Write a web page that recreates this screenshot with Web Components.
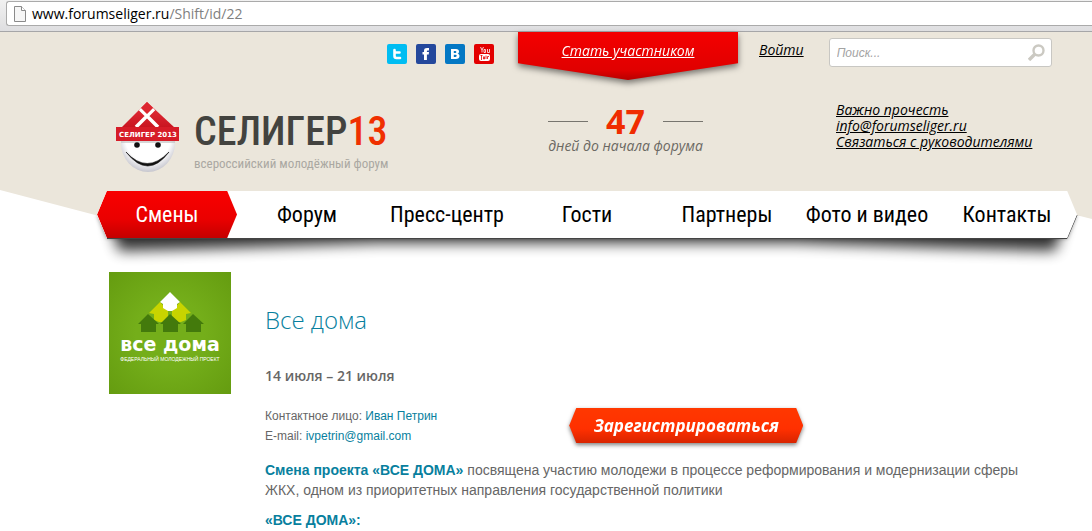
<!DOCTYPE html>
<html lang="ru">
<head>
<meta charset="utf-8">
<meta name="viewport" content="width=device-width, initial-scale=1">
<title>Все дома — Селигер 2013</title>
<style>
  :root {
    --sand: #ebe6db;
    --teal: #087f9e;
    --grey: #666;
    --font-display: "Open Sans", "Noto Sans", sans-serif;
    --font-narrow: "Roboto Condensed", "Liberation Sans Narrow", "DejaVu Sans Condensed", sans-serif;
    --font-body: "Liberation Sans", Arial, sans-serif;
  }

  body {
    margin: 0;
    background: #fff;
    color: var(--grey);
    font-family: var(--font-body);
  }
</style>
</head>
<body>
<address-bar host="www.forumseliger.ru" path="/Shift/id/22"></address-bar>

<site-header>
  <social-link slot="social" kind="twitter"></social-link>
  <social-link slot="social" kind="facebook"></social-link>
  <social-link slot="social" kind="vk"></social-link>
  <social-link slot="social" kind="youtube"></social-link>
  <join-ribbon slot="join">Стать участником</join-ribbon>
  <search-box slot="search"></search-box>
  <site-logo slot="logo"></site-logo>
  <day-counter slot="counter" days="47">дней до начала форума</day-counter>
  <site-nav slot="nav">
    <nav-item href="#shifts" active>Смены</nav-item>
    <nav-item href="#forum">Форум</nav-item>
    <nav-item href="#press">Пресс-центр</nav-item>
    <nav-item href="#guests">Гости</nav-item>
    <nav-item href="#partners">Партнеры</nav-item>
    <nav-item href="#media">Фото и видео</nav-item>
    <nav-item href="#contacts">Контакты</nav-item>
  </site-nav>
</site-header>

<shift-page>
  <project-logo slot="logo"></project-logo>
  <span slot="title">Все дома</span>
  <span slot="dates">14 июля – 21 июля</span>
  <contact-card slot="contact" name="Иван Петрин" email="ivpetrin@gmail.com"></contact-card>
  <register-button slot="action">Зарегистрироваться</register-button>
  <shift-text lead="Смена проекта «ВСЕ ДОМА»">посвящена участию молодежи в процессе реформирования и модернизации сферы ЖКХ, одном из приоритетных направления государственной политики</shift-text>
  <shift-text lead="«ВСЕ ДОМА»:"></shift-text>
</shift-page>

<script>
  /**
   * Base class: fills an open shadow root with the result of template()
   */
  class BaseElement extends HTMLElement {
    constructor() {
      super();
      this.attachShadow({ mode: 'open' });
    }

    connectedCallback() {
      this.shadowRoot.innerHTML = this.template();
    }
  }

  /**
   * <address-bar> - browser address line
   */
  class AddressBar extends BaseElement {
    template() {
      return `
        <style>
          :host {
            display: block;
            padding: 1px 0 5px 6px;
            background: linear-gradient(#f1f1f1, #dedee0);
            border-bottom: 1px solid #a6a6a8;
          }
          .field {
            display: flex;
            align-items: center;
            gap: 6px;
            height: 23px;
            padding-left: 7px;
            background: #fff;
            border: 1px solid #aaa;
            border-right: 0;
            border-radius: 3px 0 0 3px;
            font: 14px/20px "Open Sans", sans-serif;
            color: #000;
          }
          .path { color: #808080; }
        </style>
        <div class="field">
          <svg width="12" height="16" viewBox="0 0 12 16" fill="#f6f6f6" stroke="#8a8a8a">
            <path d="M.5.5h7l4 4v11H.5z"/><path d="M7.5.5v4h4" fill="#fff"/>
          </svg>
          <div>${this.getAttribute('host')}<span class="path">${this.getAttribute('path')}</span></div>
        </div>
      `;
    }
  }

  /**
   * <social-link kind="twitter|facebook|vk|youtube">
   */
  const SOCIAL = {
    twitter: {
      label: 'Twitter', color: '#00bdf2',
      icon: '<path d="M7.5 6v6q0 2 2 2h3.500M7.500 8.500h5" fill="none" stroke="#fff" stroke-width="2.600" stroke-linecap="round"/>'
    },
    facebook: {
      label: 'Facebook', color: '#24489c',
      icon: '<path d="M8 16V10.500H6.500V8H8V6.800C8 4.700 9.200 4 11 4h2v2.400h-1.300c-.6 0-.8.3-.8.8V8H13l-.3 2.500h-1.800V16z" fill="#fff"/>'
    },
    vk: {
      label: 'ВКонтакте', color: '#0478c4',
      icon: '<path d="M6 5h5c2 0 3 1 3 2.500 0 1.200-.6 1.900-1.500 2.200 1.300.3 2 1.200 2 2.400 0 1.900-1.300 2.900-3.500 2.900H6zm2.800 2v2h1.500c1.400 0 1.400-2 0-2zm0 3.800V13h1.700c1.600 0 1.600-2.200 0-2.200z" fill="#fff" fill-rule="evenodd"/>'
    },
    youtube: {
      label: 'YouTube', color: '#e30000',
      icon: '<g fill="none" stroke="#fff"><path d="M6.500 3L8 6v2.500M9.500 3L8 6M10 5.500h1.500v3H10zM13.500 5v3.500h2V5" stroke-width=".8"/><rect x="5" y="10" width="11" height="7" rx="2" fill="#fff" stroke="none"/><path d="M6.500 11.500h2M7.500 11.500V16M9.500 12.500V15h1v-2.500M12 11.500V15M13.500 15v-2.500h1.500" stroke="#e30000" stroke-width=".8"/></g>'
    }
  };

  class SocialLink extends BaseElement {
    template() {
      const { label, color, icon } = SOCIAL[this.getAttribute('kind')];
      return `
        <style>
          :host { display: block; }
          a {
            display: block;
            height: 20px;
            border-radius: 2px;
            background: ${color};
          }
        </style>
        <a href="#${this.getAttribute('kind')}" aria-label="${label}">
          <svg width="20" height="20" viewBox="0 0 20 20">${icon}</svg>
        </a>
      `;
    }
  }

  /**
   * <join-ribbon> - red pennant hanging from the top edge
   */
  class JoinRibbon extends BaseElement {
    template() {
      return `
        <style>
          :host {
            display: block;
            width: 220px;
            filter: drop-shadow(0 3px 3px rgba(0, 0, 0, 0.5));
          }
          a {
            display: block;
            height: 38px;
            padding-top: 10px;
            background: linear-gradient(#f40000, #e00000 80%, #b80000);
            clip-path: polygon(0 0, 100% 0, 100% 65%, 50% 100%, 0 65%);
            font: italic 500 14px/18px var(--font-display);
            color: #fff;
            text-align: center;
          }
        </style>
        <a href="#join"><slot></slot></a>
      `;
    }
  }

  /**
   * <search-box>
   */
  class SearchBox extends BaseElement {
    template() {
      return `
        <style>
          :host { display: block; }
          form {
            display: flex;
            align-items: center;
            height: 27px;
            padding: 0 6px 0 7px;
            background: #fff;
            border: 1px solid #c8c7c3;
            border-radius: 3px;
          }
          input {
            flex: 1;
            min-width: 0;
            padding: 0;
            border: 0;
            outline: 0;
            background: none;
            font: italic 12px/18px var(--font-body);
          }
          input::placeholder { color: #a3a3a3; opacity: 1; }
          button { display: flex; padding: 0; border: 0; background: none; }
        </style>
        <form role="search">
          <input type="text" aria-label="Поиск" placeholder="Поиск...">
          <button type="button" aria-label="Найти">
            <svg width="17" height="17" viewBox="0 0 17 17" fill="none" stroke="#cbc9c2">
              <circle cx="10.500" cy="6.500" r="5" stroke-width="2.400"/><path d="M7 10l-6 6" stroke-width="3.400"/>
            </svg>
          </button>
        </form>
      `;
    }
  }

  /**
   * <site-logo> - smiling face under a roof, with the forum name
   */
  class SiteLogo extends BaseElement {
    template() {
      return `
        <style>
          :host { display: block; }
          a {
            display: flex;
            gap: 13px;
            color: #43433f;
            text-decoration: none;
          }
          svg { flex: none; }
          .name {
            display: block;
            padding-top: 9px;
            font: 500 40px/46px var(--font-narrow);
            white-space: nowrap;
          }
          .name b { color: #f03000; font-weight: 500; }
          .motto {
            display: block;
            font: 13px/18px var(--font-narrow);
            color: #aaa8a2;
            white-space: nowrap;
          }
        </style>
        <a href="#home">
          <svg width="66" height="74" viewBox="0 0 66 74">
            <defs>
              <radialGradient id="face" cx=".5" cy=".4" r=".6">
                <stop offset=".7" stop-color="#fff"/><stop offset="1" stop-color="#c6c6ce"/>
              </radialGradient>
              <linearGradient id="roof" x2="0" y2="1">
                <stop offset="0" stop-color="#e8323c"/><stop offset="1" stop-color="#c81420"/>
              </linearGradient>
            </defs>
            <ellipse cx="33" cy="43" rx="27" ry="29" fill="url(#face)"/>
            <path d="M32 2L6 28h54z" fill="url(#roof)"/>
            <path d="M25 9l18 18M39 9L21 27" stroke="#fff" stroke-width="3.500"/>
            <path d="M32 2l6 6-6 6-6-6z" fill="#dc2630"/>
            <path d="M1 27h63v14H1z" fill="#d61c28"/>
            <path d="M6 41h54v2H6z" fill="#bbb" opacity=".6"/>
            <circle cx="22" cy="45" r="2.800" fill="#111"/><circle cx="43" cy="45" r="2.800" fill="#111"/>
            <path d="M11 52q22 28 43 0-22 23-43 0z" fill="#111" stroke="#111" stroke-width=".6"/>
            <text x="33" y="37" text-anchor="middle" font-family="DejaVu Sans" font-weight="700" font-size="7" fill="#fff">СЕЛИГЕР 2013</text>
          </svg>
          <span>
            <span class="name">СЕЛИГЕР<b>13</b></span>
            <span class="motto">всероссийский молодёжный форум</span>
          </span>
        </a>
      `;
    }
  }

  /**
   * <day-counter days="47">
   */
  class DayCounter extends BaseElement {
    template() {
      return `
        <style>
          :host {
            display: block;
            font: italic 500 14px/16px var(--font-display);
            color: #6b6963;
            text-align: center;
            white-space: nowrap;
          }
          .days {
            display: flex;
            align-items: center;
            justify-content: space-between;
            font: 700 34px/34px var(--font-display);
            color: #f02c00;
          }
          .days::before,
          .days::after {
            content: "";
            width: 40px;
            border-top: 1px solid #77756f;
          }
        </style>
        <div class="days">${this.getAttribute('days')}</div>
        <slot></slot>
      `;
    }
  }

  /**
   * <site-nav> - pointed menu bar with a shadow that is deeper at both ends
   */
  class SiteNav extends BaseElement {
    template() {
      return `
        <style>
          :host { display: grid; }
          .shadow,
          nav { grid-area: 1 / 1; }
          .shadow {
            width: 100%;
            height: 84px;
            margin-bottom: -36px;
            overflow: visible;
          }
          nav {
            display: grid;
            grid-template-columns: repeat(7, 1fr);
            height: 47px;
            background: #fff;
            clip-path: polygon(1% 0, 99% 0, 100% 50%, 99% 100%, 1% 100%, 0 50%);
          }
        </style>
        <svg class="shadow" viewBox="0 0 980 84" preserveAspectRatio="none">
          <defs>
            <filter id="soft" x="-5%" y="-100%" width="110%" height="300%"><feGaussianBlur stdDeviation="7"/></filter>
            <filter id="edge" x="-5%" y="-50%" width="110%" height="200%"><feGaussianBlur stdDeviation="2"/></filter>
            <clipPath id="below"><path d="M-20 24H0L10 47H970L980 24h20v80H-20z"/></clipPath>
          </defs>
          <g clip-path="url(#below)">
            <path d="M12 30H968L958 60Q840 57 700 52H280Q140 57 22 60z" fill="#000" opacity=".8" filter="url(#soft)"/>
            <path d="M0 24L10 47H970L980 24z" fill="#000" opacity=".4" filter="url(#edge)"/>
          </g>
          <path d="M980 24L970 47.500H10" fill="none" stroke="#444"/>
        </svg>
        <nav aria-label="Разделы"><slot></slot></nav>
      `;
    }
  }

  class NavItem extends BaseElement {
    template() {
      return `
        <style>
          :host { display: block; }
          a {
            display: block;
            font: 22px/47px var(--font-narrow);
            color: #000;
            text-align: center;
            text-decoration: none;
            white-space: nowrap;
          }
          :host([active]) a {
            background: linear-gradient(#f80000, #ea0000 60%, #c40000);
            clip-path: polygon(7% 0, 93% 0, 100% 50%, 93% 100%, 7% 100%, 0 50%);
            color: #fff;
          }
        </style>
        <a href="${this.getAttribute('href')}"><slot></slot></a>
      `;
    }
  }

  /**
   * <site-header> - sand background ending in a wide wedge, top tools, logo row, menu
   */
  class SiteHeader extends BaseElement {
    template() {
      return `
        <style>
          :host { display: grid; }
          .back,
          .front { grid-area: 1 / 1; min-width: 0; }
          .back {
            width: 100%;
            height: 206px;
          }
          .front { padding: 0 15px 0 97px; }
          .tools {
            display: flex;
            align-items: flex-start;
            height: 68px;
            padding: 0 25px 0 290px;
          }
          .social {
            display: flex;
            gap: 9px;
            padding-top: 12px;
            margin-right: 24px;
          }
          .login {
            padding: 9px 0 0;
            margin: 0 25px 0 21px;
          }
          .search { flex: 1; padding-top: 6px; }
          .brand {
            display: flex;
            height: 91px;
            padding-left: 18px;
          }
          .logo { flex: none; width: 273px; }
          .counter { flex: none; width: 155px; margin: 4px 133px 0 160px; }
          .links {
            display: flex;
            flex-direction: column;
            align-items: flex-start;
            padding-top: 2px;
          }
          .login,
          .links {
            font: italic 500 14px/18px var(--font-display);
            white-space: nowrap;
          }
          .links { line-height: 16px; }
          .login a,
          .links a { color: #000; }
        </style>
        <svg class="back" viewBox="0 0 1092 206" preserveAspectRatio="none">
          <path d="M0 0H1092V187L1000 164V200H160L0 158z" fill="var(--sand)"/>
        </svg>
        <div class="front">
          <div class="tools">
            <div class="social"><slot name="social"></slot></div>
            <slot name="join"></slot>
            <div class="login"><a href="#login">Войти</a></div>
            <div class="search"><slot name="search"></slot></div>
          </div>
          <div class="brand">
            <div class="logo"><slot name="logo"></slot></div>
            <div class="counter"><slot name="counter"></slot></div>
            <div class="links">
              <a href="#read">Важно прочесть</a>
              <a href="mailto:info@forumseliger.ru">info@forumseliger.ru</a>
              <a href="#heads">Связаться с руководителями</a>
            </div>
          </div>
          <slot name="nav"></slot>
        </div>
      `;
    }
  }

  /**
   * <project-logo> - green square with a pyramid of houses
   */
  class ProjectLogo extends BaseElement {
    template() {
      return `
        <style>
          :host { display: block; }
          svg { display: block; }
        </style>
        <svg width="122" height="122" viewBox="0 0 122 122">
          <defs>
            <radialGradient id="grass" r=".7">
              <stop offset=".4" stop-color="#74ae1a"/><stop offset="1" stop-color="#659c10"/>
            </radialGradient>
          </defs>
          <path d="M0 0h122v122H0z" fill="url(#grass)"/>
          <g fill="#c8d400">
            <path d="M51 30L40 41l5 1v6l5 2h4l5-4v-7z"/>
            <path d="M71 30l11 11-5 1v6l-5 2h-4l-5-4v-7z"/>
          </g>
          <path d="M61 20l10 10-3 2v4l-5 3h-4l-5-3v-4l-3-2z" fill="#fff"/>
          <g fill="#437a0c">
            <path id="house" d="M39 42L29 52h3v8h15v-8h3z"/>
            <use href="#house" x="22"/>
            <use href="#house" x="45"/>
          </g>
          <g fill="#fff" text-anchor="middle">
            <text x="61" y="79" font-family="DejaVu Sans" font-weight="700" font-size="19">все дома</text>
            <text x="61" y="89" font-family="Liberation Sans" font-size="5">ФЕДЕРАЛЬНЫЙ МОЛОДЕЖНЫЙ ПРОЕКТ</text>
          </g>
        </svg>
      `;
    }
  }

  /**
   * <contact-card name email>
   */
  class ContactCard extends BaseElement {
    template() {
      const email = this.getAttribute('email');
      return `
        <style>
          :host { display: block; font-size: 12px; line-height: 20px; }
          a { color: var(--teal); text-decoration: none; }
        </style>
        <div>Контактное лицо: <a href="#contact">${this.getAttribute('name')}</a></div>
        <div>E-mail: <a href="mailto:${email}">${email}</a></div>
      `;
    }
  }

  /**
   * <register-button>
   */
  class RegisterButton extends BaseElement {
    template() {
      return `
        <style>
          :host {
            display: block;
            filter: drop-shadow(0 2px 2px rgba(0, 0, 0, 0.5));
          }
          button {
            display: block;
            width: 234px;
            height: 35px;
            padding: 0;
            border: 0;
            background: linear-gradient(#ff3800, #ff3000 60%, #d82400);
            clip-path: polygon(3% 0, 97% 0, 100% 50%, 97% 100%, 3% 100%, 0 50%);
            font: italic 700 17px/32px var(--font-display);
            color: #fff;
          }
        </style>
        <button type="button"><slot></slot></button>
      `;
    }
  }

  /**
   * <shift-text lead="..."> - paragraph with a highlighted beginning
   */
  class ShiftText extends BaseElement {
    template() {
      return `
        <style>
          :host { display: block; }
          p { margin: 0; font-size: 14px; line-height: 20px; }
          b { color: var(--teal); }
        </style>
        <p><b>${this.getAttribute('lead')}</b> <slot></slot></p>
      `;
    }
  }

  /**
   * <shift-page> - project logo on the left, description on the right
   */
  class ShiftPage extends BaseElement {
    template() {
      return `
        <style>
          :host {
            display: flex;
            align-items: flex-start;
            gap: 34px;
            padding: 33px 40px 0 109px;
          }
          main { flex: 1; min-width: 0; }
          h1 {
            margin: 32px 0 0;
            font: 300 24px/32px var(--font-display);
            color: var(--teal);
          }
          .dates {
            margin: 30px 0 0;
            font: 600 14px/20px var(--font-display);
          }
          .row {
            display: flex;
            gap: 132px;
            margin: 20px 0 14px;
          }
          .action { padding-top: 2px; }
          .text {
            display: flex;
            flex-direction: column;
            gap: 10px;
          }
        </style>
        <slot name="logo"></slot>
        <main>
          <h1><slot name="title"></slot></h1>
          <p class="dates"><slot name="dates"></slot></p>
          <div class="row">
            <slot name="contact"></slot>
            <div class="action"><slot name="action"></slot></div>
          </div>
          <div class="text"><slot></slot></div>
        </main>
      `;
    }
  }

  customElements.define('address-bar', AddressBar);
  customElements.define('social-link', SocialLink);
  customElements.define('join-ribbon', JoinRibbon);
  customElements.define('search-box', SearchBox);
  customElements.define('site-logo', SiteLogo);
  customElements.define('day-counter', DayCounter);
  customElements.define('nav-item', NavItem);
  customElements.define('site-nav', SiteNav);
  customElements.define('site-header', SiteHeader);
  customElements.define('project-logo', ProjectLogo);
  customElements.define('contact-card', ContactCard);
  customElements.define('register-button', RegisterButton);
  customElements.define('shift-text', ShiftText);
  customElements.define('shift-page', ShiftPage);
</script>
</body>
</html>
